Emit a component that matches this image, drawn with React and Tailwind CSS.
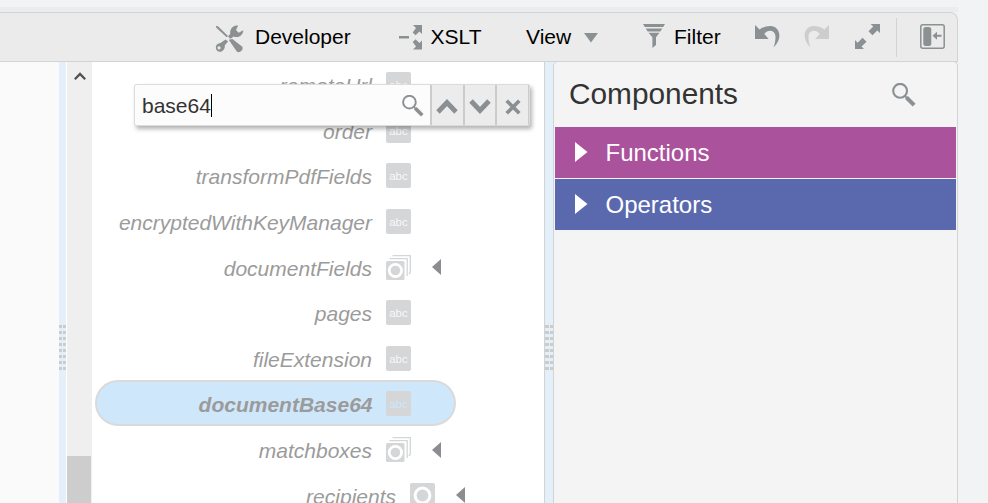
import React from "react";

const ROWS = [
  { name: "remoteUrl", kind: "abc" },
  { name: "order", kind: "abc" },
  { name: "transformPdfFields", kind: "abc" },
  { name: "encryptedWithKeyManager", kind: "abc" },
  { name: "documentFields", kind: "stack" },
  { name: "pages", kind: "abc" },
  { name: "fileExtension", kind: "abc" },
  { name: "documentBase64", kind: "abc", selected: true },
  { name: "matchboxes", kind: "stack" },
  { name: "recipients", kind: "object", nested: true },
];

function AbcIcon({ selected }) {
  return (
    <span
      className={
        "flex h-[25px] w-[25px] shrink-0 items-center justify-center rounded-[2px] bg-[#d4d6d8] pt-[2px] text-[11.5px] leading-none not-italic font-normal " +
        (selected ? "text-[#cfe7fb]" : "text-[#f8f8f8]")
      }
    >
      abc
    </span>
  );
}

function StackIcon() {
  return (
    <svg className="h-[25px] w-[25px] shrink-0" viewBox="0 0 25 25">
      <path d="M6.500 .6H24.300V17.500L22.800 19M3.500 3.600H21.200V21" fill="none" stroke="#d4d6d8" strokeWidth="1.300" />
      <rect x="0" y="6" width="18.500" height="19" rx="1.500" fill="#d4d6d8" />
      <circle cx="9.400" cy="15.500" r="6.200" fill="none" stroke="#fff" strokeWidth="2.800" />
    </svg>
  );
}

function ObjectIcon() {
  return (
    <svg className="h-[25px] w-[25px] shrink-0" viewBox="0 0 25 25">
      <rect width="25" height="25" rx="2" fill="#d4d6d8" />
      <circle cx="12.500" cy="12.500" r="7.400" fill="none" stroke="#fff" strokeWidth="3" />
    </svg>
  );
}

function Magnifier({ size }) {
  return (
    <svg className={"shrink-0 " + size} viewBox="1 0.700 24.500 25" fill="none" stroke="#8b9093">
      <circle cx="9.200" cy="8.800" r="7.200" strokeWidth="2.200" />
      <path d="M14 14l2 2" strokeWidth="2" />
      <path d="M15.800 15.800l8 7.900" strokeWidth="4.200" />
    </svg>
  );
}

function Row({ row }) {
  return (
    <div className={"flex h-[45.6px] shrink-0 items-center " + (row.nested ? "pl-[24px]" : "")}>
      <div
        className={
          "flex h-[46px] items-center " +
          (row.selected
            ? "-mt-px ml-[3px] w-[361px] rounded-full border-2 border-[#dadada] bg-[#cfe7fb]"
            : "w-[364px]")
        }
      >
        <span
          className={
            "shrink-0 text-right text-[21px] leading-[24px] italic text-[#9b9b9b] " +
            (row.selected ? "w-[275.5px] pt-[4px] font-bold" : "w-[280px] pt-[3px]")
          }
        >
          {row.name}
        </span>
        <span className={"flex shrink-0 items-center " + (row.selected ? "ml-[13.5px]" : "ml-[14px]")}>
          {row.kind === "abc" && <AbcIcon selected={row.selected} />}
          {row.kind === "stack" && <StackIcon />}
          {row.kind === "object" && <ObjectIcon />}
          {row.kind !== "abc" && (
            <svg className="ml-[21px] h-[16px] w-[9px]" viewBox="0 0 9 16">
              <path d="M9 0v16L0 8z" fill="#8b8d90" />
            </svg>
          )}
        </span>
      </div>
    </div>
  );
}

function Grip() {
  return (
    <div className="mt-[263px] flex flex-col gap-[3px]">
      {Array.from({ length: 8 }, (_, i) => (
        <div key={i} className="flex h-[3px] gap-px">
          <span className="h-[3px] flex-1 bg-[#cccccc]" />
          <span className="h-[3px] flex-1 bg-[#cccccc]" />
        </div>
      ))}
    </div>
  );
}

function Toolbar() {
  return (
    <header className="flex h-[50px] w-[958px] shrink-0 items-center rounded-tr-[8px] border-y border-r border-[#d2d3d4] bg-[#ebebeb] pl-[215px] text-[21px] leading-[24px] text-black">
      <svg className="relative top-[2px] h-[28px] w-[29px]" viewBox="0 0 29 28" fill="#8b9093">
        <path d="M1 .8L3 1.300 13 11l-1.300 1.300L1.300 2.800z" />
        <path d="M23.200.6A6.900 6.900 0 0 0 15.300 8.700L13 11.600l2.400 2.100 3.400-2.200A6.800 6.800 0 0 0 28.300 5.300L23.600 7.700 21 5z" />
        <path fillRule="evenodd" d="M10.500 14.600l2.600 2-3.300 3.600c.3 2.500-.6 5.100-3.200 6.200C3.400 27.600.9 25.500.8 22.700c0-2.700 2.100-4.400 4.700-4.600zM4 21.200a1.600 1.600 0 1 0 .1 3.200A1.600 1.600 0 0 0 4 21.200z" />
        <path d="M13.700 14.800l3.700-.7 9.300 7.200c1.400 1.200 1.100 2.800-.1 4.300-1.500 1.700-3.600 2.200-5 .6z" />
      </svg>
      <span className="ml-[11px] w-[97px]">Developer</span>
      <svg className="ml-[47px] h-[26px] w-[24px]" viewBox="0 0 24 26" fill="#8b9093">
        <path d="M0 12h10v2.500H0zM14 1h9v9l-2.500-2.500-4 3.800-2.800-2.800 3.300-4.500zM14 25.500h9v-9L20.500 19l-4-3.800-2.800 2.800 3.300 4.500z" />
      </svg>
      <span className="ml-[7.5px] w-[53.5px]">XSLT</span>
      <span className="ml-[42px] w-[47px]">View</span>
      <svg className="mt-px ml-[11px] h-[10px] w-[14px]" viewBox="0 0 14 10">
        <path d="M0 0h14L7 9.500z" fill="#8b9093" />
      </svg>
      <svg className="ml-[45px] mt-[-2px] h-[24px] w-[22px]" viewBox="0 0 22 24" fill="#8b9093">
        <path d="M0 0h22l-1.800 3H1.800zM2.700 4.400h16.600l-2 3H4.700zM5.500 8.700h11L13 13.200V21l-3.600 3V13.200z" />
      </svg>
      <span className="ml-[9px] w-[48px]">Filter</span>
      <svg className="ml-[33px] h-[24px] w-[25px]" viewBox="0 0 25 24" fill="#8b9093">
        <path d="M0 0V14H13.700L9.300 9C11 6.500 13.500 5.600 15.500 5.800C19 6.200 20.500 9 20.500 12C20.500 15.500 19.800 19 18.500 22.500C22.500 18.500 24.400 14.500 24.400 10.500C24.400 5 20.500 1 15.500 1C11 1 7.500 2.300 4.600 4.600Z" />
      </svg>
      <svg className="ml-[24px] h-[24px] w-[25px] -scale-x-100" viewBox="0 0 25 24" fill="#cbcdcf">
        <path d="M0 0V14H13.700L9.300 9C11 6.500 13.500 5.600 15.500 5.800C19 6.200 20.500 9 20.500 12C20.500 15.500 19.800 19 18.500 22.500C22.500 18.500 24.400 14.500 24.400 10.500C24.400 5 20.500 1 15.500 1C11 1 7.500 2.300 4.600 4.600Z" />
      </svg>
      <svg className="ml-[26px] mt-[-2px] h-[25px] w-[25px]" viewBox="0 0 25 25" fill="#8b9093">
        <path d="M15.500 0H25v9l-2.700-2.500-4.800 4.700-4-4 4.800-4.600zM0 16v9h9l-2.500-2.500 5-4.800-4-4-4.800 5z" />
      </svg>
      <span className="ml-[16px] h-[39px] w-px bg-[#d2d3d4]" />
      <svg className="ml-[23px] mt-[-2px] h-[25px] w-[25px]" viewBox="0 0 25 25">
        <rect x=".8" y=".8" width="23.400" height="23.400" rx="2" fill="none" stroke="#8b9093" strokeWidth="1.500" />
        <rect x="3.300" y="3" width="8" height="19" rx="2.500" fill="#8b9093" />
        <path d="M12.500 11.700L17 7.800v3h4.500v1.900H17v3z" fill="#8b9093" />
      </svg>
    </header>
  );
}

function SearchBox() {
  return (
    <div className="absolute left-[67px] top-[22px] flex h-[42px] w-[396px] rounded-[2px] border border-[#dcdcdc] bg-[#fcfcfc] shadow-[2px_3px_4px_rgba(0,0,0,0.3)]">
      <div className="flex w-[295px] items-center pl-[7px] text-[21px] leading-[24px] text-[#333]">
        <span className="pt-[2px]">base64</span>
        <span className="h-[23px] w-px bg-black" />
        <span className="ml-auto mr-[6px] mt-[2px] flex">
          <Magnifier size="h-[22px] w-[22px]" />
        </span>
      </div>
      <div className="flex flex-1 divide-x-2 divide-[#cccccc] border-l-2 border-r border-[#cccccc] bg-[#ececec]">
        <span className="flex flex-1 items-center justify-center">
          <svg className="mt-px h-[16px] w-[22px]" viewBox="0 0 22 16">
            <path d="M2 14l9-9.500L20 14" fill="none" stroke="#8b8f92" strokeWidth="4.800" />
          </svg>
        </span>
        <span className="flex flex-1 items-center justify-center">
          <svg className="mt-[2px] h-[16px] w-[22px]" viewBox="0 0 22 16">
            <path d="M2 3l9 9.500L20 3" fill="none" stroke="#8b8f92" strokeWidth="4.800" />
          </svg>
        </span>
        <span className="flex flex-1 items-center justify-center">
          <svg className="mt-[3px] h-[16px] w-[16px]" viewBox="0 0 16 16">
            <path d="M1.700 1.700l12.600 12.600M14.300 1.700L1.700 14.300" stroke="#8b8f92" strokeWidth="3.700" />
          </svg>
        </span>
      </div>
    </div>
  );
}

function Section({ label, color }) {
  return (
    <div className={"flex h-[51px] items-center pl-[20px] text-[24px] leading-[28px] text-white " + color}>
      <svg className="relative top-[-1px] h-[20px] w-[13px]" viewBox="0 0 13 20">
        <path d="M0 0v20l12.500-10z" fill="#fff" />
      </svg>
      <span className="ml-[17.5px]">{label}</span>
    </div>
  );
}

export default function App() {
  return (
    <div className="flex h-[503px] w-[988px] flex-col overflow-hidden bg-[#f2f3f5] pt-[7px] font-['Liberation_Sans',Arial,sans-serif]">
      <div className="h-[5px] w-[958px] shrink-0 bg-[#ececec]" />
      <Toolbar />
      <div className="flex h-[441px] w-[958px] shrink-0">
        <div className="w-[59px] bg-[#fafafa]" />
        <div className="w-[7px] bg-[#e3f0fa]">
          <Grip />
        </div>
        <main className="relative flex w-[479px] border-x border-r-[#d2d3d4] border-l-white bg-white">
          <div className="flex w-[25px] flex-col justify-between bg-[#efefef]">
            <svg className="ml-[7px] mt-[9px] h-[10px] w-[12px]" viewBox="0 0 12 10">
              <path d="M.8 8.300l5.200-5.400 5.200 5.400" fill="none" stroke="#505050" strokeWidth="2.300" />
            </svg>
            <div className="h-[47px] w-[24px] bg-[#cdcdcd]" />
          </div>
          <div className="flex h-[441px] flex-1 flex-col overflow-hidden">
            {ROWS.map((row) => (
              <Row key={row.name} row={row} />
            ))}
          </div>
          <SearchBox />
        </main>
        <div className="w-[8px] bg-[#e3f0fa]">
          <Grip />
        </div>
        <aside className="-mt-px w-[405px] rounded-t-[5px] border-x border-t border-[#d2d3d4] bg-[#f4f4f4] px-px">
          <div className="flex h-[65px] items-center pl-[14px] pr-[40px] text-[29.8px] leading-[34px] text-[#333]">
            <span className="-mt-px">Components</span>
            <span className="ml-auto flex">
              <Magnifier size="h-[24px] w-[24px]" />
            </span>
          </div>
          <div className="flex flex-col gap-px">
            <Section label="Functions" color="bg-[#aa529b]" />
            <Section label="Operators" color="bg-[#5a69ae]" />
          </div>
        </aside>
      </div>
    </div>
  );
}
